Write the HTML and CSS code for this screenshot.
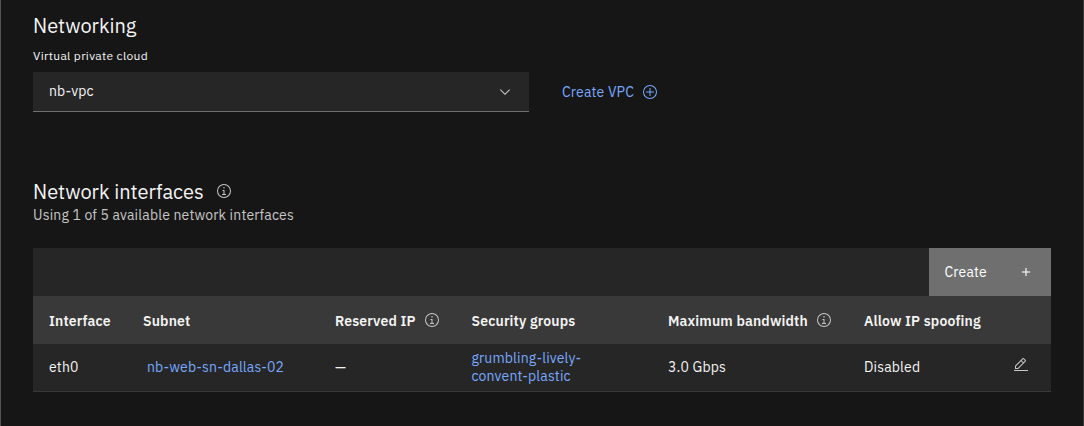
FILE: index.html
```html
<!DOCTYPE html>
<html lang="en">
<head>
<meta charset="utf-8">
<title>Networking</title>
<link rel="stylesheet" href="styles.css">
</head>
<body>
<svg class="sprite" aria-hidden="true">
  <symbol id="info" viewBox="0 0 32 32"><path d="M17 22v-8h-4v2h2v6h-3v2h8v-2zM16 8a1.5 1.5 0 1 0 1.5 1.5A1.5 1.5 0 0 0 16 8z"/><path d="M16 30a14 14 0 1 1 14-14 14 14 0 0 1-14 14zm0-26a12 12 0 1 0 12 12A12 12 0 0 0 16 4z"/></symbol>
  <symbol id="chevron" viewBox="0 0 16 16"><path d="M8 11 3 6l.7-.7L8 9.6l4.3-4.3.7.7z"/></symbol>
  <symbol id="add-circle" viewBox="0 0 32 32"><path d="M16 4A12 12 0 1 1 4 16 12 12 0 0 1 16 4m0-2a14 14 0 1 0 14 14A14 14 0 0 0 16 2z"/><path d="M24 15h-7V8h-2v7H8v2h7v7h2v-7h7z"/></symbol>
  <symbol id="add" viewBox="0 0 32 32"><path d="M17.500 14.500V8h-3v6.500H8v3h6.500V24h3v-6.500H24v-3z"/></symbol>
  <symbol id="edit" viewBox="0 0 32 32"><path d="M2 26h28v2H2zM25.4 9c.8-.8.8-2 0-2.8l-3.6-3.6c-.8-.8-2-.8-2.8 0l-15 15V24h6.4l15-15zm-5-5L24 7.600l-3 3L17.400 7l3-3zM6 22v-3.600l10-10 3.600 3.600-10 10H6z"/></symbol>
</svg>
<main class="page">
  <h2 class="title">Networking</h2>
  <div class="label">Virtual private cloud</div>
  <div class="vpc-row">
    <div class="dropdown"><span class="dropdown-value">nb-vpc</span><svg class="icon"><use href="#chevron"/></svg></div>
    <a class="create-vpc"><span>Create VPC</span><svg class="icon"><use href="#add-circle"/></svg></a>
  </div>
  <div class="section-head"><h2 class="title">Network interfaces</h2><svg class="icon"><use href="#info"/></svg></div>
  <p class="usage">Using 1 of 5 available network interfaces</p>
  <section class="table">
    <div class="toolbar"><div class="create-button"><span>Create</span><svg class="icon"><use href="#add"/></svg></div></div>
    <div class="row header">
      <span>Interface</span>
      <span>Subnet</span>
      <span class="with-icon"><span>Reserved IP</span><svg class="icon"><use href="#info"/></svg></span>
      <span>Security groups</span>
      <span class="with-icon"><span>Maximum bandwidth</span><svg class="icon"><use href="#info"/></svg></span>
      <span>Allow IP spoofing</span>
    </div>
    <div class="row body">
      <span>eth0</span>
      <a class="link c-subnet">nb-web-sn-dallas-02</a>
      <span>—</span>
      <a class="link">grumbling-lively-<br>convent-plastic</a>
      <span>3.0 Gbps</span>
      <span>Disabled</span>
      <svg class="icon edit"><use href="#edit"/></svg>
    </div>
  </section>
</main>
</body>
</html>
```
FILE: styles.css
```css
* { box-sizing: border-box; }
body { margin: 0; background: #161616; color: #f4f4f4; font: 14px/18px "IBM Plex Sans", Roboto, sans-serif; letter-spacing: .16px; }
.sprite { position: absolute; width: 0; height: 0; }
.page { height: 426px; padding: 12px 32px 0; border-left: 1px solid #525252; border-right: 1px solid #393939; overflow: hidden; }
.icon { width: 16px; height: 16px; flex: none; fill: #c6c6c6; display: block; }
.title { margin: 0; font-size: 20px; line-height: 28px; font-weight: 400; letter-spacing: 0; white-space: nowrap; }
.label { margin-top: 8px; font-size: 12px; line-height: 16px; letter-spacing: .32px; }
.vpc-row { display: flex; margin-top: 8px; gap: 33px; }
.dropdown { width: 496px; height: 40px; padding: 0 16px; display: flex; align-items: center; justify-content: space-between; background: #262626; border-bottom: 1px solid #6f6f6f; }
.dropdown-value { padding-bottom: 1px; }
.create-vpc { display: flex; align-items: center; gap: 8px; color: #78a9ff; }
.create-vpc .icon { fill: #78a9ff; }
.section-head { display: flex; gap: 12px; margin-top: 66px; height: 28px; }
.section-head .icon { margin-top: 5px; }
.usage { margin: 0; color: #c6c6c6; }
.table { margin-top: 24px; width: 1018px; }
.toolbar { height: 48px; display: flex; justify-content: flex-end; background: #262626; }
.create-button { width: 122px; padding: 0 17px 0 15.500px; display: flex; align-items: center; justify-content: space-between; background: #6f6f6f; color: #fff; }
.create-button .icon { fill: #e0e0e0; }
.row { display: grid; grid-template-columns: 94px 192px 136.500px 196.500px 196px 149px 1fr; align-items: center; height: 48px; padding-left: 16px; background: #262626; white-space: nowrap; }
.header { background: #393939; font-weight: 600; letter-spacing: .16px; padding-top: 2px; }
.body { border-bottom: 1px solid #393939; padding-bottom: 2px; }
.with-icon { display: flex; align-items: center; gap: 8px; }
.with-icon .icon { margin-top: -3px; }
.link { color: #78a9ff; }
.c-subnet { padding-left: 4px; }
.edit { margin-top: -3px; }
```
